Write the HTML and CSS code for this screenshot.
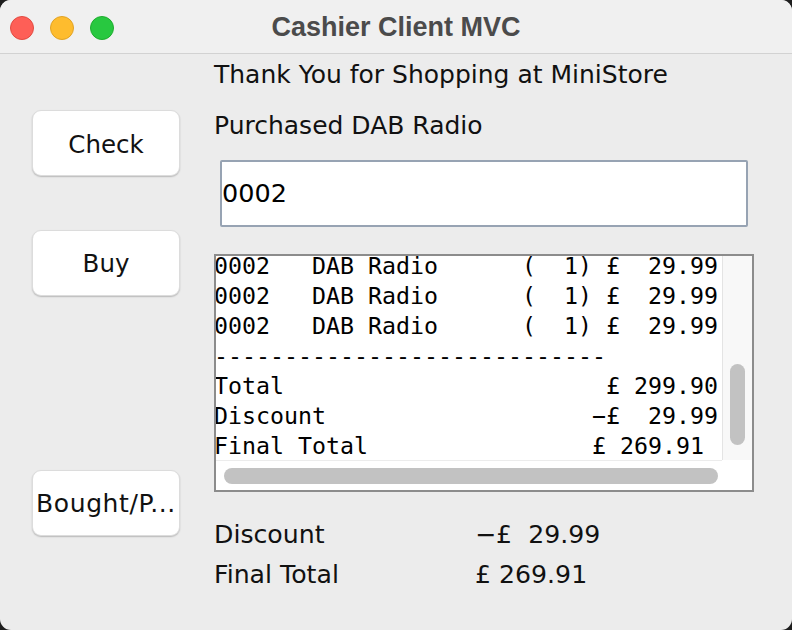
FILE: index.html
```html
<!DOCTYPE html>
<html lang="en">
<head>
<meta charset="utf-8">
<title>Cashier Client MVC</title>
<link rel="stylesheet" href="styles.css">
</head>
<body>
<div class="window">
  <header class="titlebar">
    <div class="lights">
      <span class="light red"></span>
      <span class="light yellow"></span>
      <span class="light green"></span>
    </div>
    <div class="title">Cashier Client MVC</div>
    <div></div>
  </header>
  <main class="content">
    <div class="buttons">
      <button class="btn btn-check">Check</button>
      <button class="btn btn-buy">Buy</button>
      <button class="btn btn-bought">Bought/P...</button>
    </div>
    <div class="panel">
      <div class="label label-thanks">Thank You for Shopping at MiniStore</div>
      <div class="label label-purchased">Purchased DAB Radio</div>
      <div class="field">0002</div>
      <div class="receipt">
        <div class="receipt-view"><pre class="receipt-text">0002   DAB Radio      (  1) £  29.99
0002   DAB Radio      (  1) £  29.99
0002   DAB Radio      (  1) £  29.99
----------------------------
Total                       £ 299.90
Discount                   −£  29.99
Final Total                £ 269.91</pre></div>
        <div class="vscroll"><div class="vthumb"></div></div>
        <div class="hscroll"><div class="hthumb"></div></div>
        <div class="corner"></div>
      </div>
      <div class="summary">
        <span class="sum-label">Discount</span><span class="sum-value">−£  29.99</span>
        <span class="sum-label">Final Total</span><span class="sum-value">£ 269.91</span>
      </div>
    </div>
  </main>
</div>
</body>
</html>
```
FILE: styles.css
```css
html, body {
  margin: 0;
  padding: 0;
  background: #1e1e1e;
}
.window {
  width: 792px;
  height: 630px;
  background: #ececec;
  border-radius: 11px;
  overflow: hidden;
  font-family: "DejaVu Sans", sans-serif;
  color: #111;
}
.titlebar {
  height: 53px;
  background: #f0f0f0;
  border-bottom: 1px solid #d2d2d2;
  display: grid;
  grid-template-columns: 1fr auto 1fr;
  align-items: center;
}
.lights {
  display: flex;
  gap: 16px;
  padding-left: 10px;
  padding-top: 2px;
}
.light {
  width: 22px;
  height: 22px;
  border-radius: 50%;
  border: 1px solid transparent;
}
.red { background: #fe5f57; border-color: #e24b41; }
.yellow { background: #febc2e; border-color: #e1a325; }
.green { background: #28c840; border-color: #1ead2e; }
.title {
  font-family: "Liberation Sans", Arial, sans-serif;
  font-weight: bold;
  font-size: 27px;
  color: #4b4b4b;
  padding-top: 2px;
}
.content {
  display: flex;
  padding-left: 32px;
  gap: 34px;
}
.buttons {
  width: 148px;
  display: flex;
  flex-direction: column;
  padding-top: 56px;
}
.btn {
  width: 148px;
  height: 66px;
  background: #fff;
  border: 1px solid #dcdcdc;
  border-radius: 9px;
  box-shadow: 0 1px 1.5px rgba(0,0,0,0.22);
  font-family: "DejaVu Sans", sans-serif;
  font-size: 24.5px;
  color: #111;
  padding: 2px 0 0 0;
  white-space: nowrap;
}
.btn-buy { margin-top: 54px; padding-top: 0; }
.btn-bought {
  margin-top: 174px;
  font-size: 25px;
  letter-spacing: 0.6px;
  padding-top: 0;
}
.panel {
  width: 540px;
  display: flex;
  flex-direction: column;
  padding-top: 6px;
}
.label {
  font-size: 25px;
  line-height: 30px;
  height: 30px;
  white-space: nowrap;
}
.label-purchased { margin-top: 21px; }
.field {
  margin-top: 19px;
  margin-left: 6px;
  width: 524px;
  height: 63px;
  background: #fff;
  border: 2px solid #97a3b3;
  border-radius: 2px;
  font-size: 25.5px;
  line-height: 63px;
  color: #000;
}
.receipt {
  margin-top: 27px;
  width: 536px;
  height: 234px;
  border: 2px solid #8c8c8c;
  background: #fff;
  display: grid;
  grid-template-columns: 1fr 30px;
  grid-template-rows: 1fr 30px;
}
.receipt-view {
  overflow: hidden;
  background: #fff;
}
.receipt-text {
  margin: -5px 0 0 -2px;
  font-family: "DejaVu Sans Mono", monospace;
  font-size: 23.25px;
  line-height: 30px;
  color: #000;
}
.vscroll {
  background: #f8f8f8;
  border-left: 1px solid #e4e4e4;
  display: flex;
  flex-direction: column;
  align-items: center;
  padding-top: 108px;
}
.vthumb {
  width: 15px;
  height: 81px;
  border-radius: 8px;
  background: #c2c2c2;
}
.hscroll {
  background: #fff;
  border-top: 1px solid #ececec;
  padding: 7px 4px 0 8px;
}
.hthumb {
  height: 16px;
  border-radius: 8px;
  background: #c2c2c2;
}
.corner {
  background: #fff;
}
.summary {
  margin-top: 28px;
  display: grid;
  grid-template-columns: 261px auto;
  row-gap: 10px;
  font-size: 25.2px;
  line-height: 30px;
}
.sum-value {
  white-space: pre;
}
```
